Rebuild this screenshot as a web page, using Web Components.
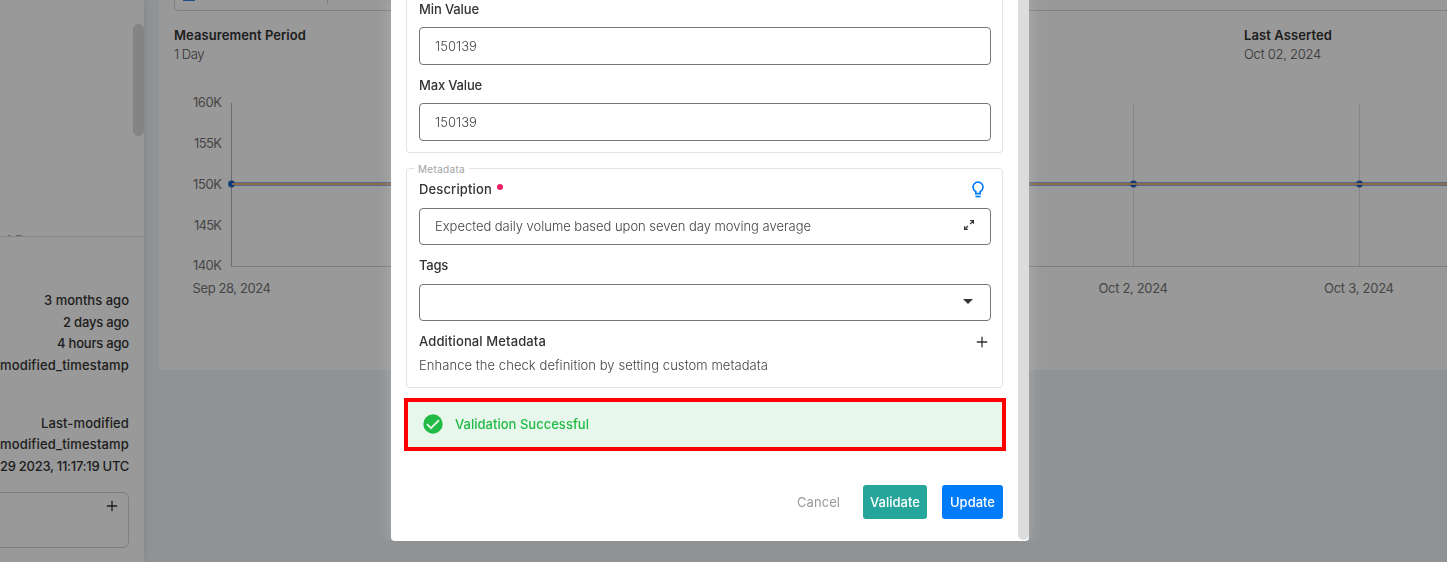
<!DOCTYPE html>
<html lang="en">
<head>
<meta charset="utf-8">
<title>Check details</title>
<style>
html,body{margin:0;height:100%;overflow:hidden}
body{font-family:Inter,"Open Sans",sans-serif;font-size:13px;color:#333}
</style>
</head>
<body>
<app-shell>
  <side-panel slot="side"></side-panel>
  <check-card slot="main"></check-card>
  <edit-dialog slot="dialog">
    <field-group>
      <form-field label="Min Value" lw="60"><fit-text w="42">150139</fit-text></form-field>
      <form-field label="Max Value" lw="63"><fit-text w="42">150139</fit-text></form-field>
    </field-group>
    <field-group legend="Metadata">
      <form-field label="Description" lw="73" required hint><fit-text w="376">Expected daily volume based upon seven day moving average</fit-text><ui-icon slot="end" name="expand"></ui-icon></form-field>
      <form-field label="Tags" lw="29"><ui-icon slot="end" name="caret"></ui-icon></form-field>
      <extra-meta></extra-meta>
    </field-group>
    <status-alert><fit-text w="134">Validation Successful</fit-text></status-alert>
    <action-button slot="actions" kind="text"><fit-text w="43">Cancel</fit-text></action-button>
    <action-button slot="actions" kind="teal"><fit-text w="50">Validate</fit-text></action-button>
    <action-button slot="actions" kind="blue"><fit-text w="45">Update</fit-text></action-button>
  </edit-dialog>
</app-shell>
<script>
class Base extends HTMLElement {
  constructor() { super(); this.attachShadow({ mode: 'open' }); }
  connectedCallback() { this.shadowRoot.innerHTML = '<style>*{box-sizing:border-box}' + this.css() + '</style>' + this.html(); }
  css() { return ''; }
  html() { return '<slot></slot>'; }
}
const def = (n, c) => customElements.define(n, c);

/* Frame: side panel, main column, scrim and dialog layer */
def('app-shell', class extends Base {
  css() { return `:host{display:flex;height:100vh;background:#f0f5fa;overflow:hidden}
  .side{flex:0 0 144px;background:#fff;box-shadow:0 0 7px rgba(0,0,0,.1);display:flex}
  .main{flex:1;padding-left:15px;min-width:0}
  .layer{position:fixed;inset:0;background:rgba(0,0,0,.4);display:flex;justify-content:center;align-items:flex-start;padding-right:27px}`; }
  html() { return `<div class="side"><slot name="side"></slot></div><div class="main"><slot name="main"></slot></div><div class="layer"><slot name="dialog"></slot></div>`; }
});

/* Text whose tracking is tuned to a given advance width */
def('fit-text', class extends Base {
  css() { return `:host{display:inline-block;white-space:pre}`; }
  connectedCallback() {
    super.connectedCallback();
    const w = +this.getAttribute('w'), n = this.textContent.length;
    if (!w) return;
    const fit = () => {
      this.style.letterSpacing = '0px';
      const now = this.getBoundingClientRect().width;
      if (now) this.style.letterSpacing = ((w - now) / n).toFixed(3) + 'px';
    };
    fit();
    addEventListener('DOMContentLoaded', fit);
  }
});

def('ui-icon', class extends Base {
  css() { return `:host{display:block;line-height:0}svg{display:block}`; }
  html() {
    return {
      plus: `<svg width="12" height="12" viewBox="0 0 12 12"><path d="M6 .8v10.400M.8 6h10.400" fill="none" stroke="currentColor" stroke-width="1.300"/></svg>`,
      expand: `<svg width="12" height="12" viewBox="0 0 12 12" fill="none" stroke="#333" stroke-width="1.200"><path d="M7.200 1.600h3.200v3.200M10.300 1.800L7 5.100M4.800 10.400H1.600V7.200M1.800 10.200L5 7"/></svg>`,
      caret: `<svg width="10" height="5" viewBox="0 0 10 5"><path d="M0 0h10L5 5z" fill="#333"/></svg>`,
      bulb: `<svg width="12" height="17" viewBox="0 0 12 17"><path d="M3.800 12.600v-2.100A5 5 0 1 1 8.200 10.500V12.600z" fill="none" stroke="#007bf9" stroke-width="1.600"/><path d="M3.500 15.500h5" stroke="#007bf9" stroke-width="1.700"/></svg>`,
      check: `<svg width="20" height="20" viewBox="0 0 20 20"><circle cx="10" cy="10" r="9.700" fill="#21ba45"/><path d="M4 10.200l4 4 8-8" fill="none" stroke="#e8f7ec" stroke-width="1.900"/></svg>`
    }[this.getAttribute('name')];
  }
});

def('side-panel', class extends Base {
  css() { return `:host{display:flex;flex-direction:column;width:144px;color:#333;font-weight:450;overflow:hidden}
  .top{height:237px;border-bottom:1px solid #dedede;display:flex;justify-content:space-between;padding-top:24px;flex:none}
  .bar{width:11px;height:112px;border-radius:6px;background:#dcdcdc}
  .peek{align-self:flex-end;display:flex;gap:3px;margin-left:8px}
  .peek i{width:2px;height:1px;background:#aaa}.peek i+i{width:6px}.peek i:first-child{margin-right:3px}
  .rows{padding:53px 15px 0 0;display:flex;flex-direction:column;align-items:flex-end}
  .rows fit-text{height:21.600px;line-height:21.600px}
  .rows fit-text.gap{margin-top:36.500px}
  .box{margin:14px 15px 0 -8px;height:56px;flex:none;border:1px solid #d6d6d6;border-radius:6px;display:flex;justify-content:flex-end;padding:7px 10px}`; }
  html() { return `<div class="top"><div class="peek"><i></i><i></i></div><div class="bar"></div></div>
  <div class="rows"><fit-text w="85">3 months ago</fit-text><fit-text w="66">2 days ago</fit-text><fit-text w="72">4 hours ago</fit-text><fit-text w="129">modified_timestamp</fit-text>
  <fit-text class="gap" w="88">Last-modified</fit-text><fit-text w="129">modified_timestamp</fit-text><fit-text w="129">29 2023, 11:17:19 UTC</fit-text></div>
  <div class="box"><ui-icon name="plus"></ui-icon></div>`; }
});

def('check-card', class extends Base {
  css() { return `:host{display:block;height:370px;background:#fff;border-radius:0 0 0 4px;overflow:hidden}
  .strip{margin-left:15px;height:11px;border:solid #d6d6d6;border-width:0 0 1px 1px;border-radius:0 0 0 4px;display:flex}
  .tab{width:12px;height:1px;background:#2e8bea;margin-left:8px}
  .sep{margin-left:132px;width:1px;height:4px;background:#d6d6d6}
  .meta{display:grid;grid-template-columns:1070px 1fr;margin:14px 0 0 15px}
  .cell{display:flex;flex-direction:column;align-items:flex-start}
  .cell fit-text{height:19px;line-height:20px}
  .cell :first-child{font-weight:560;color:#333}.cell :last-child{color:#555;font-weight:350}
  svg{display:block;margin-top:25px}`; }
  html() {
    const t = (x, y, w, s) => `<text x="${x}" y="${y}" textLength="${w}">${s}</text>`;
    return `<div class="strip"><i class="tab"></i><i class="sep"></i></div>
    <div class="meta"><div class="cell"><fit-text w="132">Measurement Period</fit-text><fit-text w="30">1 Day</fit-text></div>
    <div class="cell"><fit-text w="88">Last Asserted</fit-text><fit-text w="77">Oct 02, 2024</fit-text></div></div>
    <svg width="1288" height="216" viewBox="159 88 1288 216" font-size="13" fill="#757575">
    <g stroke="#dedede"><path d="M1133.500 103v163M1359.500 103v163" /><path d="M231 266.500h1216" stroke="#d0d0d0"/><path d="M231.500 103v163.500" stroke="#b4b4b4"/></g>
    <path d="M232 184h1215" stroke="#8eb2e4" stroke-width="4"/>
    <g fill="#1f63c9"><circle cx="231.500" cy="184" r="3.400"/><circle cx="1133.500" cy="184" r="3.400"/><circle cx="1359.500" cy="184" r="3.400"/></g>
    <path d="M232 184h1215" stroke="#e8b27c" stroke-width="2"/>
    ${t(193, 107, 29, '160K')}${t(194, 148, 28, '155K')}${t(193, 189, 29, '150K')}${t(194, 230, 28, '145K')}${t(193, 270, 29, '140K')}
    ${t(192.500, 293, 78.500, 'Sep 28, 2024')}${t(1098.500, 293, 69.500, 'Oct 2, 2024')}${t(1324, 293, 70, 'Oct 3, 2024')}</svg>`;
  }
});

def('edit-dialog', class extends Base {
  css() { return `:host{display:flex;width:638px;height:541px;background:#fff;border-radius:0 0 4px 4px;box-shadow:0 0 14px rgba(255,255,255,.22);clip-path:inset(0 -16px)}
  .body{flex:0 0 627px;min-width:0;padding:0 15px;display:flex;flex-direction:column}
  .bar{flex:0 0 11px;background:#dcdcdc;border-radius:0 0 6px 6px;height:540px}
  .actions{display:flex;justify-content:flex-end;gap:15px;margin-top:34px}`; }
  html() { return `<div class="body"><slot></slot><div class="actions"><slot name="actions"></slot></div></div><div class="bar"></div>`; }
});

def('field-group', class extends Base {
  css() { return `:host{display:block;flex:none;position:relative;width:597px;box-sizing:border-box;border:1px solid #e3e3e3;padding:0 11px 0 12px}
  :host(:not([legend])){height:153px;border-top:0;border-radius:0 0 4px 4px}
  :host([legend]){height:220px;margin-top:15px;border-radius:4px;padding-top:10px}
  .lg{position:absolute;left:8px;top:-7px;background:#fff;padding:0 4px 0 3px;height:14px;line-height:15px;font-size:10px;color:#a3a3a3}`; }
  html() { const l = this.getAttribute('legend'); return (l ? `<div class="lg"><fit-text w="47">${l}</fit-text></div>` : '') + '<slot></slot>'; }
});

def('form-field', class extends Base {
  css() { return `:host{display:block;height:76px}
  .label{display:flex;align-items:center;height:20px;font-weight:450;color:#333}
  :host(:not([required]):not([label=Tags])) .label{height:18px;margin-bottom:9px}
  .dot{width:6px;height:6px;border-radius:50%;background:#e91e63;margin:-5px 0 0 5px}
  .label ui-icon{margin:1px 7px 0 auto}
  .box{margin-top:9px;height:37px;border:1px solid #757575;border-radius:4px;display:flex;align-items:center;justify-content:space-between;padding:0 16px 0 15px;color:#444;font-weight:320}
  :host(:not([required]):not([label=Tags])) .box{height:38px;margin-top:0}
  .box ::slotted(fit-text){margin-top:-1px}
  ::slotted([name=expand]){margin-top:-3px;margin-right:-1px}
  ::slotted([name=caret]){margin:-2px 1px 0 auto}`; }
  html() {
    return `<div class="label"><fit-text w="${this.getAttribute('lw')}">${this.getAttribute('label')}</fit-text>${this.hasAttribute('required') ? '<i class="dot"></i>' : ''}${this.hasAttribute('hint') ? '<ui-icon name="bulb"></ui-icon>' : ''}</div><div class="box"><slot></slot><slot name="end"></slot></div>`;
  }
});

def('extra-meta', class extends Base {
  css() { return `:host{display:block}
  .h{display:flex;justify-content:space-between;align-items:center;height:20px;font-weight:450;padding-right:3px;color:#333}
  .h ui-icon{margin-top:1px}
  .d{display:flex;height:24px;margin-top:2px;align-items:center;color:#444;font-weight:320}`; }
  html() { return `<div class="h"><fit-text w="127">Additional Metadata</fit-text><ui-icon name="plus"></ui-icon></div><div class="d"><fit-text w="349">Enhance the check definition by setting custom metadata</fit-text></div>`; }
});

def('status-alert', class extends Base {
  css() { return `:host{display:flex;align-items:center;flex:none;height:53px;width:602px;margin:10px 0 0 -2px;box-sizing:border-box;border:4px solid #f00;background:#e8f7ec;color:#21ba45;font-weight:450;padding:0 0 1px 15px;gap:12px}`; }
  html() { return `<ui-icon name="check"></ui-icon><slot></slot>`; }
});

def('action-button', class extends Base {
  css() { return `:host{display:flex;align-items:center;justify-content:center;height:34px;border-radius:3px;color:#fff;font-weight:500}
  :host([kind=text]){color:#999;font-weight:400;width:59px}
  :host([kind=teal]){background:#26a69a;width:64px}
  :host([kind=blue]){background:#007bf9;width:61px}`; }
});
</script>
</body>
</html>
